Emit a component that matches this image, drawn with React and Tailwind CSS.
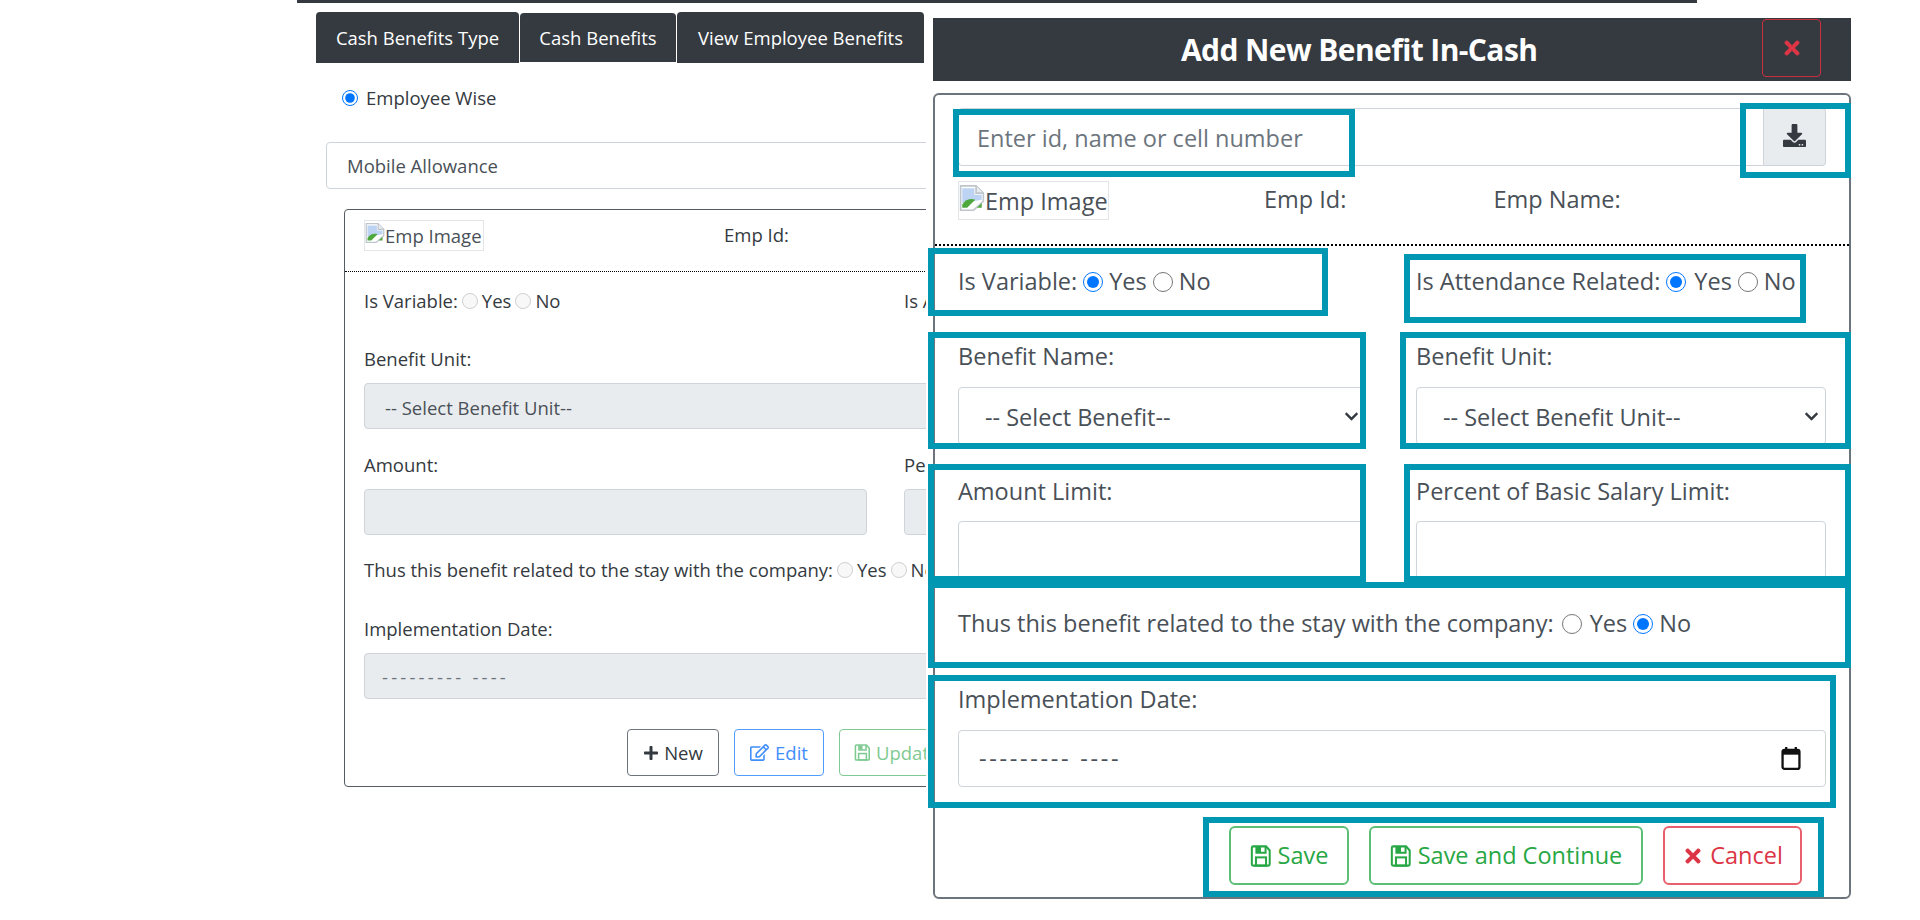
import React from "react";
import { FaDownload, FaTimes, FaPlus, FaRegEdit, FaChevronDown } from "react-icons/fa";

const BrokenImage = ({ className }) => (
  <svg viewBox="0 0 16 16" className={className}>
    <path d="M1 .5h9.5L15 5v5L9 15.5H1z" fill="#fff" stroke="#bfc5cc" strokeWidth="1" />
    <path d="M10.5 .5V5H15" fill="#e8ebef" stroke="#bfc5cc" strokeWidth="1" />
    <path d="M2 2h7.5v4H14v3L2 11z" fill="#bcd3f3" />
    <path d="M2 14v-2c2-3 5-4 8-3l-5 5z" fill="#4fa83d" />
    <path d="M11 14l3-3v3z" fill="#4fa83d" />
  </svg>
);

const Calendar = ({ className }) => (
  <svg viewBox="0 0 20 24" className={className}>
    <path d="M5 0v4M15 0v4" stroke="#111" strokeWidth="2.4" />
    <rect x="1.2" y="3" width="17.6" height="19.8" rx="2" fill="#fff" stroke="#111" strokeWidth="2.4" />
    <rect x="1.2" y="3" width="17.6" height="5" fill="#111" />
  </svg>
);

const Floppy = ({ className }) => (
  <svg viewBox="0 0 24 24" fill="none" stroke="currentColor" strokeWidth="2.2" className={className}>
    <path d="M3.5 1.5h14l4 4.5v15a1.5 1.5 0 0 1-1.5 1.5H3.5A1.5 1.5 0 0 1 2 21V3a1.5 1.5 0 0 1 1.5-1.5z" />
    <path d="M7 1.5v7h10v-7" />
    <rect x="6.5" y="13.5" width="11" height="9" />
    <rect x="7.5" y="2" width="4.5" height="6" fill="currentColor" stroke="none" />
  </svg>
);

const Radio = ({ on, off, big, className = "" }) => (
  <input
    type="radio"
    readOnly
    disabled={off}
    checked={!!on}
    className={(big ? "m-0 size-5 shrink-0 " : "m-0 size-4 shrink-0 ") + className}
  />
);

const Teal = ({ className }) => (
  <div className={"pointer-events-none absolute border-[6px] border-[#0097b2] " + className} />
);

function LeftPage() {
  return (
    <div className="text-[18.5px] text-[#343a40]">
      <div className="ml-[297px] h-[3px] w-[1400px] bg-[#343a40]" />
      <div className="ml-[316px] mt-[9px] flex h-[51px] items-stretch gap-px text-white">
        <div className="flex w-[203px] items-center justify-center rounded-t bg-[#343a40] pt-px">Cash Benefits Type</div>
        <div className="my-px flex w-[156px] items-center justify-center rounded-t bg-[#343a40] pt-px">Cash Benefits</div>
        <div className="flex w-[247px] items-center justify-center rounded-t bg-[#343a40] pt-px">View Employee Benefits</div>
      </div>
      <div className="ml-[342px] mt-[23px] flex h-6 items-center gap-2">
        <Radio on />
        <span>Employee Wise</span>
      </div>
      <div className="ml-[326px] mt-8 flex h-[47px] w-[1100px] items-center rounded border border-[#ced4da] pl-[20px] pt-px text-[#495057]">
        Mobile Allowance
      </div>
      <div className="ml-[344px] mt-5 h-[578px] w-[1082px] rounded border-[1.5px] border-[#555b61]">
        <div className="flex h-[62px] items-start border-b border-dotted border-black pl-[19px] pt-[10px]">
          <div className="flex h-[31px] w-[120px] items-center whitespace-nowrap border border-[#e3e6e9] pt-px text-[#495057]">
            <BrokenImage className="size-[20px] shrink-0 -translate-y-[3px]" />
            <span>Emp Image</span>
          </div>
          <div className="ml-[240px] leading-[30px]">Emp Id:</div>
        </div>
        <div className="mt-[14px] grid h-[30px] grid-cols-[503px_503px] items-center gap-[37px] pl-[19px]">
          <div className="flex items-center gap-[4px]">
            <span>Is Variable:</span>
            <Radio off />
            <span>Yes</span>
            <Radio off />
            <span>No</span>
          </div>
          <div className="whitespace-nowrap">Is Attendance Related:</div>
        </div>
        <div className="pl-[19px] pr-[18px]">
          <div className="mt-[28px] h-[30px] leading-[30px]">Benefit Unit:</div>
          <div className="mt-[9px] flex h-[46px] items-center rounded border border-[#ced4da] bg-[#e9ecef] pl-[20px] pt-[3px] text-[#495057]">
            -- Select Benefit Unit--
          </div>
          <div className="mt-[21px] grid grid-cols-[503px_503px] gap-[37px]">
            <div>
              <div className="h-[30px] leading-[30px]">Amount:</div>
              <div className="mt-[9px] h-[46px] rounded border border-[#ced4da] bg-[#e9ecef]" />
            </div>
            <div>
              <div className="h-[30px] leading-[30px]">Percent of Basic Salary:</div>
              <div className="mt-[9px] h-[46px] rounded border border-[#ced4da] bg-[#e9ecef]" />
            </div>
          </div>
          <div className="mt-[20px] flex h-[30px] items-center gap-[4px] whitespace-nowrap">
            <span>Thus this benefit related to the stay with the company:</span>
            <Radio off />
            <span>Yes</span>
            <Radio off />
            <span>No</span>
          </div>
          <div className="mt-[29px] h-[30px] leading-[30px]">Implementation Date:</div>
          <div className="mt-[9px] flex h-[46px] items-center rounded border border-[#ced4da] bg-[#e9ecef] pl-[17px] pt-px tracking-[3.2px] text-[#6c757d]">
            --------- ----
          </div>
        </div>
        <div className="ml-[282px] mt-[30px] flex h-[47px] gap-[15px]">
          <div className="flex w-[92px] items-center justify-center gap-[5px] rounded border-[1.5px] border-[#6c757d] text-[#343a40]">
            <FaPlus className="size-4" />
            New
          </div>
          <div className="flex w-[90px] items-center justify-center gap-[6px] rounded border-[1.5px] border-[#4f9dff] text-[#3f8efc]">
            <FaRegEdit className="size-[19px]" />
            Edit
          </div>
          <div className="flex w-[106px] items-center justify-start gap-[5px] rounded border-[1.5px] border-[#7fca92] pl-[14px] text-[#7fca92]">
            <Floppy className="size-[17px] shrink-0" />
            Update
          </div>
        </div>
      </div>
    </div>
  );
}

function Modal() {
  const input = "rounded border border-[#ced4da] bg-white";
  return (
    <div className="absolute left-[926px] top-3 h-[908px] w-[994px] bg-white text-[23.5px] text-[#495057]">
      <div className="ml-[7px] mt-[6px] flex h-[63px] w-[918px] items-center bg-[#343a40]">
        <div className="ml-[248px] w-[355px] whitespace-nowrap text-center text-[30px] font-bold tracking-[-0.6px] text-white">Add New Benefit In-Cash</div>
        <div className="ml-[226px] flex h-[58px] w-[59px] -translate-y-[2px] items-center justify-center rounded border-[1.5px] border-[#c9303f] text-[#dc3545]">
          <FaTimes className="size-[22px]" />
        </div>
      </div>
      <div className="ml-[7px] mt-3 h-[806px] w-[918px] rounded-md border-2 border-[#6c757d]">
        <div className="h-[151px] border-b-2 border-dotted border-black px-[23px] pt-[13px]">
          <div className="flex h-[58px] w-[868px]">
            <div className="flex flex-1 items-center rounded-l border border-[#ced4da] pl-[18px] pt-1 text-[#6c757d]">Enter id, name or cell number</div>
            <div className="flex w-[62px] items-center justify-center rounded-r border border-l-0 border-[#ced4da] bg-[#e9ecef] pb-[3px] text-[#343a40]">
              <FaDownload className="size-[23px]" />
            </div>
          </div>
          <div className="mt-[15px] flex items-start">
            <div className="flex h-[39px] w-[151px] items-center border border-[#e3e6e9] pt-[2px]">
              <BrokenImage className="size-[26px] shrink-0 -translate-y-[4px]" />
              <span className="whitespace-nowrap">Emp Image</span>
            </div>
            <div className="ml-[155px] leading-[36px]">Emp Id:</div>
            <div className="ml-[147px] leading-[36px]">Emp Name:</div>
          </div>
        </div>
        <div className="grid h-[70px] grid-cols-[408px_410px] items-center gap-[50px] px-[23px] pt-px">
          <div className="flex items-center gap-[6px] whitespace-nowrap">
            <span>Is Variable:</span>
            <Radio on big />
            <span>Yes</span>
            <Radio big />
            <span>No</span>
          </div>
          <div className="flex items-center gap-[6px] whitespace-nowrap">
            <span>Is Attendance Related:</span>
            <Radio on big />
            <span className="ml-[2px]">Yes</span>
            <Radio big />
            <span>No</span>
          </div>
        </div>
        <div className="grid grid-cols-[408px_410px] gap-x-[50px] px-[23px]">
          <div>
            <div className="mt-[25px] h-[30px] leading-[30px]">Benefit Name:</div>
            <div className={"relative mt-4 h-[58px] " + input}>
              <select className="h-full w-full appearance-none pl-[26px] pt-1 outline-none">
                <option>-- Select Benefit--</option>
              </select>
              <FaChevronDown className="pointer-events-none absolute right-[6px] top-[21px] size-[15px] text-[#343a40]" />
            </div>
          </div>
          <div>
            <div className="mt-[25px] h-[30px] leading-[30px]">Benefit Unit:</div>
            <div className={"relative mt-4 h-[58px] " + input}>
              <select className="h-full w-full appearance-none pl-[26px] pt-1 outline-none">
                <option>-- Select Benefit Unit--</option>
              </select>
              <FaChevronDown className="pointer-events-none absolute right-[6px] top-[21px] size-[15px] text-[#343a40]" />
            </div>
          </div>
          <div>
            <div className="mt-[31px] h-[30px] leading-[30px]">Amount Limit:</div>
            <div className={"mt-[15px] h-[58px] " + input} />
          </div>
          <div>
            <div className="mt-[31px] h-[30px] leading-[30px]">Percent of Basic Salary Limit:</div>
            <div className={"mt-[15px] h-[58px] " + input} />
          </div>
        </div>
        <div className="mt-[30px] flex h-[30px] items-center gap-[6px] whitespace-nowrap px-[23px]">
          <span>Thus this benefit related to the stay with the company:</span>
          <Radio big className="ml-[2px]" />
          <span className="ml-[2px]">Yes</span>
          <Radio on big />
          <span>No</span>
        </div>
        <div className="px-[23px]">
          <div className="mt-[45px] h-[30px] leading-[30px]">Implementation Date:</div>
          <div className={"mt-4 flex h-[57px] items-center justify-between pl-5 pr-[24px] " + input}>
            <span className="tracking-[2.7px]">--------- ----</span>
            <Calendar className="h-[23px] w-[20px]" />
          </div>
          <div className="mt-[39px] flex h-[59px] justify-end gap-5 pr-[24px]">
            <div className="flex w-[120px] items-center justify-center gap-[6px] rounded-md border-2 border-[#5cbf75] text-[#28a745]">
              <Floppy className="size-[22px] shrink-0" />
              Save
            </div>
            <div className="flex w-[274px] items-center justify-center gap-[6px] whitespace-nowrap rounded-md border-2 border-[#5cbf75] text-[#28a745]">
              <Floppy className="size-[22px] shrink-0" />
              Save and Continue
            </div>
            <div className="flex w-[139px] items-center justify-center gap-[6px] rounded-md border-2 border-[#e8606d] text-[#dc3545]">
              <FaTimes className="size-[22px] shrink-0" />
              Cancel
            </div>
          </div>
        </div>
      </div>
      <Teal className="left-[27px] top-[97px] h-[68px] w-[402px]" />
      <Teal className="left-[814px] top-[91px] h-[75px] w-[111px]" />
      <Teal className="left-[2px] top-[236px] h-[68px] w-[400px]" />
      <Teal className="left-[478px] top-[242px] h-[69px] w-[402px]" />
      <Teal className="left-[2px] top-[320px] h-[117px] w-[438px]" />
      <Teal className="left-[474px] top-[320px] h-[117px] w-[451px]" />
      <Teal className="left-[2px] top-[452px] h-[118px] w-[438px]" />
      <Teal className="left-[478px] top-[452px] h-[118px] w-[447px]" />
      <Teal className="left-[2px] top-[570px] h-[86px] w-[923px]" />
      <Teal className="left-[2px] top-[663px] h-[133px] w-[908px]" />
      <Teal className="left-[277px] top-[805px] h-[80px] w-[621px]" />
    </div>
  );
}

export default function App() {
  return (
    <div className="relative h-[920px] w-[1920px] overflow-hidden bg-white font-['Open_Sans',sans-serif]">
      <LeftPage />
      <Modal />
    </div>
  );
}
